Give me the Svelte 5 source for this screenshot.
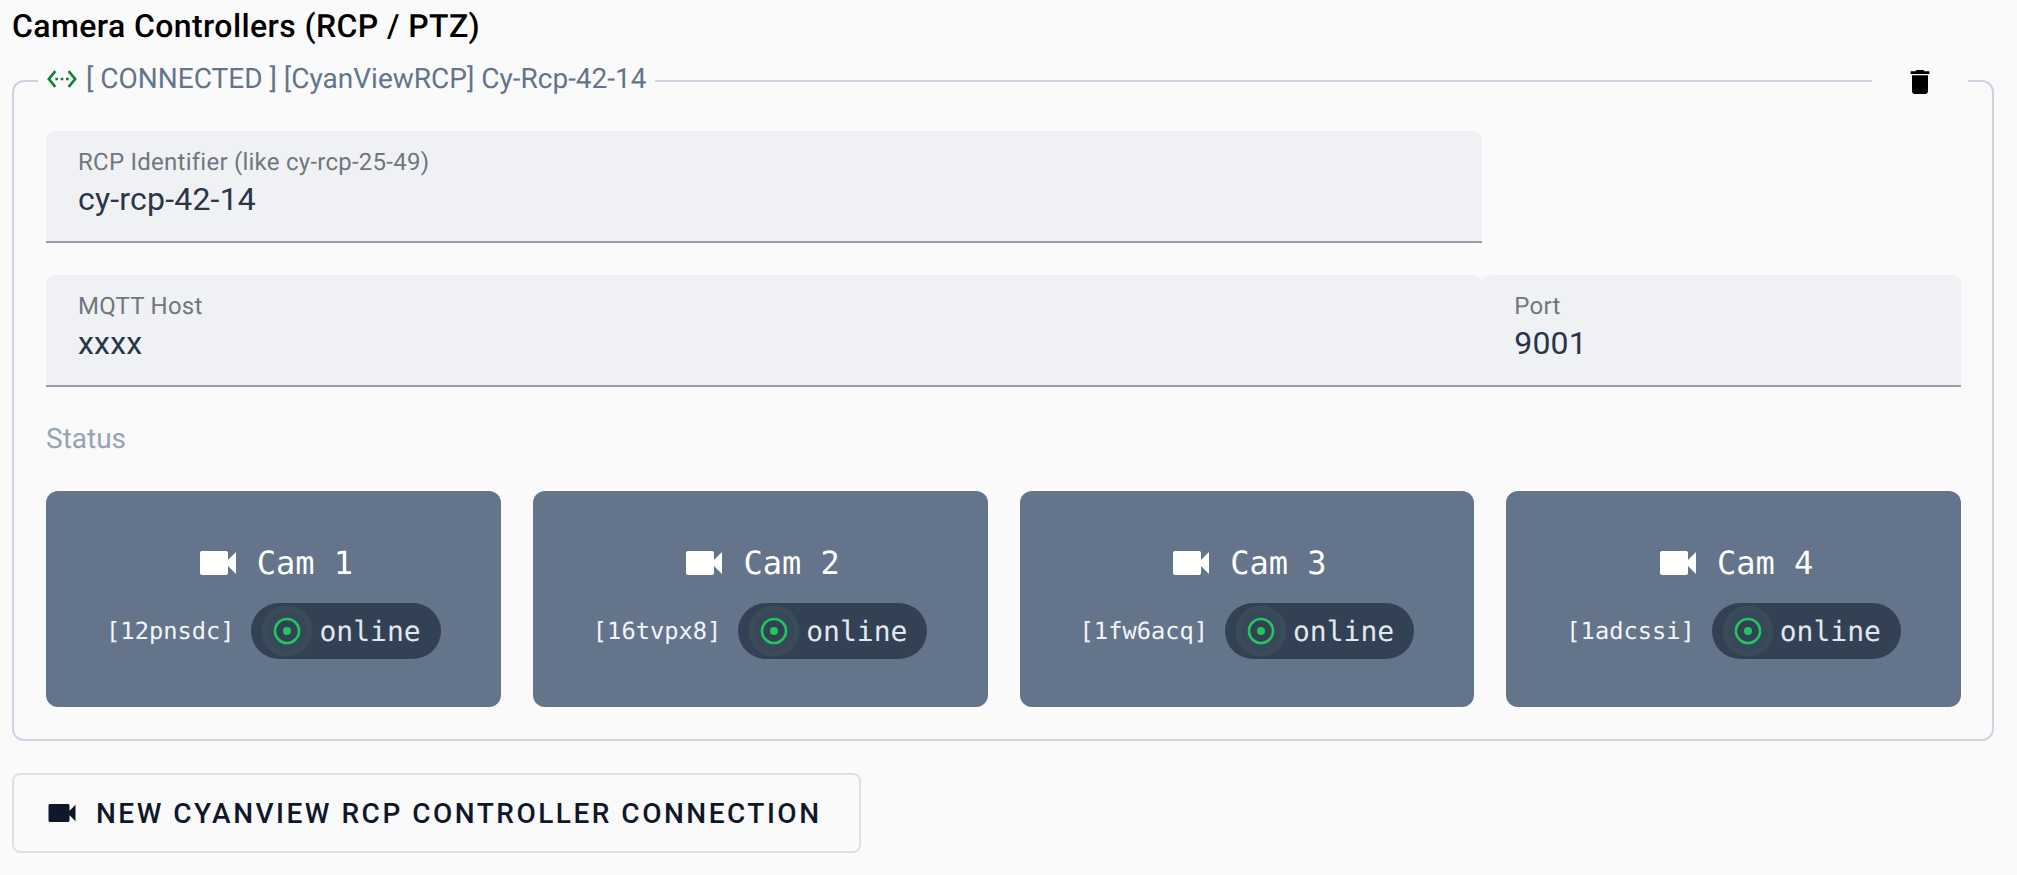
<script lang="ts">
  const cams = [
    { name: "Cam 1", id: "12pnsdc" },
    { name: "Cam 2", id: "16tvpx8" },
    { name: "Cam 3", id: "1fw6acq" },
    { name: "Cam 4", id: "1adcssi" },
  ];
  const videocam = "M17 10.5V7c0-.55-.45-1-1-1H4c-.55 0-1 .45-1 1v10c0 .55.45 1 1 1h12c.55 0 1-.45 1-1v-3.5l4 4v-11l-4 4z";
</script>

<main class="page">
  <h2 class="title">Camera Controllers (RCP / PTZ)</h2>

  <fieldset class="controller">
    <legend class="legend">
      <svg class="link-icon" viewBox="0 0 24 24" width="32" height="32">
        <path fill="currentColor" d="M7.77 6.76L6.23 5.48.82 12l5.41 6.52 1.54-1.28L3.42 12l4.35-5.24zM7 13h2v-2H7v2zm10-2h-2v2h2v-2zm-6 2h2v-2h-2v2zm6.77-7.52l-1.54 1.28L20.58 12l-4.35 5.24 1.54 1.28L23.18 12l-5.41-6.52z"/>
      </svg>
      <span>[ CONNECTED ] [CyanViewRCP] Cy-Rcp-42-14</span>
    </legend>

    <button class="delete" title="Delete connection">
      <svg viewBox="0 0 24 24" width="32" height="32">
        <path fill="currentColor" d="M6 19c0 1.1.9 2 2 2h8c1.1 0 2-.9 2-2V7H6v12zM19 4h-3.5l-1-1h-5l-1 1H5v2h14V4z"/>
      </svg>
    </button>

    <div class="fields">
      <label class="field wide">
        <span class="field-label">RCP Identifier (like cy-rcp-25-49)</span>
        <input value="cy-rcp-42-14" readonly />
      </label>
      <div class="spacer"></div>
      <label class="field wide">
        <span class="field-label">MQTT Host</span>
        <input value="xxxx" readonly />
      </label>
      <label class="field">
        <span class="field-label">Port</span>
        <input value="9001" readonly />
      </label>
    </div>

    <div class="status-label">Status</div>

    <div class="cards">
      {#each cams as cam}
        <div class="card">
          <div class="cam-name">
            <svg viewBox="0 0 24 24" width="48" height="48">
              <path fill="currentColor" d={videocam}/>
            </svg>
            <span>{cam.name}</span>
          </div>
          <div class="cam-meta">
            <span class="cam-id">[{cam.id}]</span>
            <span class="pill">
              <svg viewBox="0 0 52 52" width="52" height="52">
                <circle cx="26" cy="26" r="25.5" fill="#394c58"/>
                <circle cx="26" cy="26" r="20" fill="#364859"/>
                <circle cx="26" cy="26" r="12" fill="#334155" stroke="#22c55e" stroke-width="2.6"/>
                <circle cx="26" cy="26" r="4" fill="#22c55e"/>
              </svg>
              <span>online</span>
            </span>
          </div>
        </div>
      {/each}
    </div>
  </fieldset>

  <button class="new-conn">
    <svg viewBox="0 0 24 24" width="36" height="36">
      <path fill="currentColor" d={videocam}/>
    </svg>
    <span>NEW CYANVIEW RCP CONTROLLER CONNECTION</span>
  </button>
</main>

<style>
  :global(body) {
    margin: 0;
    background: #fafafa;
    font-family: Roboto, "Liberation Sans", sans-serif;
    text-rendering: geometricPrecision;
  }

  .page {
    padding: 0 23px 0 12px;
    display: flex;
    flex-direction: column;
    align-items: flex-start;
  }

  .title {
    margin: 6px 0 0;
    font-size: 32px;
    line-height: 40px;
    font-weight: 500;
    letter-spacing: 0.4px;
    color: #000;
  }

  .controller {
    position: relative;
    box-sizing: border-box;
    width: 100%;
    margin: 13px 0 0;
    padding: 26px 31px 32px 32px;
    border: 2px solid #cbd5e1;
    border-radius: 12px;
    min-width: 0;
  }

  .legend {
    display: flex;
    align-items: center;
    gap: 8px;
    padding: 1px 8px 5px;
    margin-left: -8px;
    margin-bottom: 2px;
    font-size: 28px;
    line-height: 38px;
    color: #64748b;
  }

  .link-icon {
    color: #15803d;
  }

  .delete {
    position: absolute;
    top: -51px;
    right: 24px;
    width: 96px;
    height: 56px;
    display: flex;
    align-items: center;
    justify-content: center;
    border: none;
    padding: 0;
    background: #fafafa;
    color: #000;
  }

  .fields {
    display: grid;
    grid-template-columns: 3fr 1fr;
    row-gap: 32px;
  }

  .field {
    display: flex;
    flex-direction: column;
    box-sizing: border-box;
    height: 112px;
    padding: 16px 32px 0;
    background: #f0f1f5;
    border-bottom: 2px solid #9a9cab;
    border-radius: 8px 8px 0 0;
  }

  .field-label {
    font-size: 24px;
    line-height: 30px;
    letter-spacing: 0.25px;
    color: #71767f;
  }

  .field input {
    border: none;
    outline: none;
    background: transparent;
    padding: 0;
    margin-top: 2px;
    font: 400 32px/40px Roboto, "Liberation Sans", sans-serif;
    letter-spacing: 0.2px;
    color: #293548;
    width: 100%;
  }

  .status-label {
    margin-top: 34px;
    font-size: 28px;
    line-height: 36px;
    color: #94a3b8;
  }

  .cards {
    display: grid;
    grid-template-columns: repeat(4, 1fr);
    gap: 32px;
    margin-top: 34px;
  }

  .card {
    height: 216px;
    display: flex;
    flex-direction: column;
    align-items: center;
    justify-content: center;
    gap: 16px;
    background: #64748b;
    border-radius: 12px;
    color: #fff;
    font-family: "DejaVu Sans Mono", monospace;
  }

  .cam-name {
    display: flex;
    align-items: center;
    gap: 15px;
    font-size: 32px;
    line-height: 48px;
  }

  .cam-meta {
    display: flex;
    align-items: center;
    gap: 17px;
  }

  .cam-id {
    font-size: 23.7px;
    color: #f1f5f9;
  }

  .pill {
    display: flex;
    align-items: center;
    gap: 6px;
    height: 56px;
    padding: 0 20px 0 10px;
    border-radius: 28px;
    background: #334155;
    font-size: 28px;
    color: #e2e8f0;
  }

  .new-conn {
    display: flex;
    align-items: center;
    gap: 16px;
    box-sizing: border-box;
    height: 80px;
    margin-top: 32px;
    padding: 0 37px 0 30px;
    background: #fafafa;
    border: 2px solid #e0e0e0;
    border-radius: 8px;
    font: 500 28px Roboto, "Liberation Sans", sans-serif;
    letter-spacing: 2.5px;
    color: #0f172a;
  }
</style>
